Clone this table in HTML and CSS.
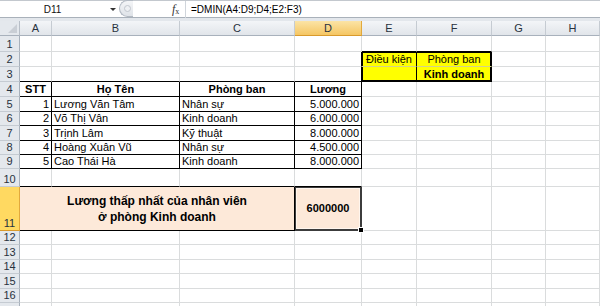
FILE: index.html
```html
<!DOCTYPE html>
<html lang="vi">
<head>
<meta charset="utf-8">
<title>DMIN</title>
<link rel="stylesheet" href="styles.css">
</head>
<body>
<div class="fbar">
  <div class="fbar-in">
    <div class="namebox"><span class="nb-text">D11</span><span class="nb-arrow"></span></div>
    <div class="fxarea">
      <span class="grip"><span class="dot"></span></span>
      <span class="fx"><i>f</i><sub>x</sub></span>
      <span class="sep"></span>
      <span class="formula">=DMIN(A4:D9;D4;E2:F3)</span>
    </div>
  </div>
</div>
<div class="sheet">
  <div class="row hdr">
    <div class="corner"><span class="tri"></span></div>
    <div class="ch">A</div><div class="ch">B</div><div class="ch">C</div><div class="ch on">D</div><div class="ch">E</div><div class="ch">F</div><div class="ch">G</div><div class="ch">H</div>
  </div>
  <div class="row h16">
    <div class="rh">1</div>
    <div class="c"></div><div class="c"></div><div class="c"></div><div class="c"></div><div class="c bkb"></div><div class="c bkb"></div><div class="c"></div><div class="c"></div>
  </div>
  <div class="row h15">
    <div class="rh">2</div>
    <div class="c"></div><div class="c"></div><div class="c"></div><div class="c bkr"></div><div class="c y ytl ctr">Điều kiện</div><div class="c y ytr ctr">Phòng ban</div><div class="c"></div><div class="c"></div>
  </div>
  <div class="row h15">
    <div class="rh">3</div>
    <div class="c bkb"></div><div class="c bkb"></div><div class="c bkb"></div><div class="c bkb bkr"></div><div class="c y ybl"></div><div class="c y ybr ctr b">Kinh doanh</div><div class="c"></div><div class="c"></div>
  </div>
  <div class="row h15">
    <div class="rh">4</div>
    <div class="c bk ctr b">STT</div><div class="c bk ctr b">Họ Tên</div><div class="c bk ctr b">Phòng ban</div><div class="c bk ctr b">Lương</div><div class="c"></div><div class="c"></div><div class="c"></div><div class="c"></div>
  </div>
  <div class="row h15">
    <div class="rh">5</div>
    <div class="c bk num">1</div><div class="c bk">Lương Văn Tâm</div><div class="c bk">Nhân sự</div><div class="c bk num">5.000.000</div><div class="c"></div><div class="c"></div><div class="c"></div><div class="c"></div>
  </div>
  <div class="row h14">
    <div class="rh">6</div>
    <div class="c bk num">2</div><div class="c bk">Võ Thị Vân</div><div class="c bk">Kinh doanh</div><div class="c bk num">6.000.000</div><div class="c"></div><div class="c"></div><div class="c"></div><div class="c"></div>
  </div>
  <div class="row h15">
    <div class="rh">7</div>
    <div class="c bk num">3</div><div class="c bk">Trịnh Lâm</div><div class="c bk">Kỹ thuật</div><div class="c bk num">8.000.000</div><div class="c"></div><div class="c"></div><div class="c"></div><div class="c"></div>
  </div>
  <div class="row h14">
    <div class="rh">8</div>
    <div class="c bk num">4</div><div class="c bk">Hoàng Xuân Vũ</div><div class="c bk">Nhân sự</div><div class="c bk num">4.500.000</div><div class="c"></div><div class="c"></div><div class="c"></div><div class="c"></div>
  </div>
  <div class="row h14">
    <div class="rh">9</div>
    <div class="c bk num">5</div><div class="c bk">Cao Thái Hà</div><div class="c bk">Kinh doanh</div><div class="c bk num">8.000.000</div><div class="c"></div><div class="c"></div><div class="c"></div><div class="c"></div>
  </div>
  <div class="row h18">
    <div class="rh">10</div>
    <div class="c bkb"></div><div class="c bkb"></div><div class="c bkb"></div><div class="c bkb"></div><div class="c"></div><div class="c"></div><div class="c"></div><div class="c"></div>
  </div>
  <div class="row h44">
    <div class="rh on">11</div>
    <div class="c sum">Lương thấp nhất của nhân viên<br>ở phòng Kinh doanh</div>
    <div class="c sel">6000000<span class="handle"></span></div>
    <div class="c"></div><div class="c"></div><div class="c"></div><div class="c"></div>
  </div>
  <div class="row h14">
    <div class="rh">12</div>
    <div class="c"></div><div class="c"></div><div class="c"></div><div class="c"></div><div class="c"></div><div class="c"></div><div class="c"></div><div class="c"></div>
  </div>
  <div class="row h15">
    <div class="rh">13</div>
    <div class="c"></div><div class="c"></div><div class="c"></div><div class="c"></div><div class="c"></div><div class="c"></div><div class="c"></div><div class="c"></div>
  </div>
  <div class="row h14">
    <div class="rh">14</div>
    <div class="c"></div><div class="c"></div><div class="c"></div><div class="c"></div><div class="c"></div><div class="c"></div><div class="c"></div><div class="c"></div>
  </div>
  <div class="row h15">
    <div class="rh">15</div>
    <div class="c"></div><div class="c"></div><div class="c"></div><div class="c"></div><div class="c"></div><div class="c"></div><div class="c"></div><div class="c"></div>
  </div>
  <div class="row h14">
    <div class="rh">16</div>
    <div class="c"></div><div class="c"></div><div class="c"></div><div class="c"></div><div class="c"></div><div class="c"></div><div class="c"></div><div class="c"></div>
  </div>
  <div class="row h15">
    <div class="rh"></div>
    <div class="c"></div><div class="c"></div><div class="c"></div><div class="c"></div><div class="c"></div><div class="c"></div><div class="c"></div><div class="c"></div>
  </div>
</div>
</body>
</html>
```

FILE: styles.css
```css
* { box-sizing: border-box; margin: 0; padding: 0; }
html, body { width: 600px; height: 306px; overflow: hidden; background: #fff; }
body { font-family: "Liberation Sans", Arial, sans-serif; font-size: 11px; color: #000; }

/* formula bar */
.fbar { height: 21px; background: #e3e7ec; border-top: 1px solid #c3c8ce; }
.fbar-in { height: 17px; display: flex; background: #fff; border-bottom: 1px solid #a9b1ba; }
.namebox { width: 119px; position: relative; display: flex; align-items: center; padding-right: 14px; font-size: 10px; color: #111; }
.nb-text { flex: 1; text-align: center; }
.nb-arrow { position: absolute; left: 110px; top: 7px; width: 0; height: 0; border-left: 3px solid transparent; border-right: 3px solid transparent; border-top: 3px solid #333; }
.fxarea { flex: 1; display: flex; align-items: center; }
.grip { width: 14px; height: 17px; margin-top: -1px; border: 1px solid #b3bac3; border-right: none; border-radius: 9px 0 0 9px; background: linear-gradient(#f4f5f7, #dfe3e8); display: flex; align-items: center; padding-left: 4px; }
.dot { width: 7px; height: 7px; border-radius: 50%; border: 1px solid #c2c7ce; background: #eef0f3; }
.fx { margin-left: 39px; font-family: "Liberation Serif", serif; font-size: 12px; color: #333; width: 12px; }
.fx sub { font-size: 8px; vertical-align: -1px; }
.sep { width: 1px; height: 17px; background: #d0d5db; margin-left: 1px; }
.formula { margin-left: 5px; font-size: 10px; color: #000; }

/* sheet */
.sheet { width: 600px; }
.row { display: grid; grid-template-columns: 20px 32px 128px 115px 67px 55px 75px 54px 54px; }
.hdr { height: 15px; }
.h14 { height: 14px; }
.h15 { height: 15px; }
.h16 { height: 16px; }
.h18 { height: 18px; }
.h44 { height: 44px; }

.corner { background: #e4e8ed; border-right: 1px solid #b7bec7; border-bottom: 1px solid #a8b1bc; position: relative; }
.tri { position: absolute; right: 2px; bottom: 2px; width: 0; height: 0; border-left: 9px solid transparent; border-bottom: 9px solid #c9ced5; }
.ch { background: linear-gradient(#f3f5f8, #e1e5ea); border-right: 1px solid #c5cbd2; border-bottom: 1px solid #a8b1bc; text-align: center; line-height: 14px; font-size: 11px; color: #28323e; }
.ch.on { background: linear-gradient(#fbe4a6, #f5c663); border-right-color: #e2a93c; border-bottom-color: #d99a2c; }
.rh { background: #e4e8ed; border-right: 1px solid #a8b1bc; border-bottom: 1px solid #c5cbd2; text-align: center; font-size: 11px; color: #28323e; display: flex; align-items: flex-end; justify-content: center; line-height: 13px; }
.rh.on { background: #ffd961; border-right-color: #e2a93c; border-bottom-color: #d99a2c; }

.c { border-right: 1px solid #dadcdd; border-bottom: 1px solid #dadcdd; padding: 0 2px; white-space: nowrap; overflow: hidden; line-height: 13px; display: flex; align-items: center; }
.ctr { justify-content: center; }
.num { justify-content: flex-end; }
.b { font-weight: bold; }
.bk { border-right-color: #000; border-bottom-color: #000; }
.bkb { border-bottom-color: #000; }
.bkr { border-right-color: #000; }

.y { background: #ffff00; }
.ytl { border-right-color: #000; border-bottom-color: #d2d28a; box-shadow: inset 1px 1px #000; }
.ytr { border-right-color: #000; border-bottom-color: #d2d28a; box-shadow: inset -1px 1px #000; }
.ybl { border-right-color: #000; border-bottom-color: #000; box-shadow: inset 1px -1px #000; }
.ybr { border-right-color: #000; border-bottom-color: #000; box-shadow: inset -1px -1px #000; }

.sum { grid-column: span 3; background: #fde9d9; border-right-color: #000; border-bottom-color: #000; flex-direction: column; justify-content: center; text-align: center; font-weight: bold; font-size: 12px; line-height: 16px; padding-top: 1px; }
.sel { position: relative; background: #fde9d9; border-right-color: #3c3c3c; border-bottom-color: #3c3c3c; box-shadow: inset 0 0 0 1px #3c3c3c, inset 0 0 0 2px #fff6ee; justify-content: center; font-weight: bold; overflow: visible; }
.handle { position: absolute; right: -3px; bottom: -3px; width: 6px; height: 6px; background: #000; border: 1px solid #fff; }
```
